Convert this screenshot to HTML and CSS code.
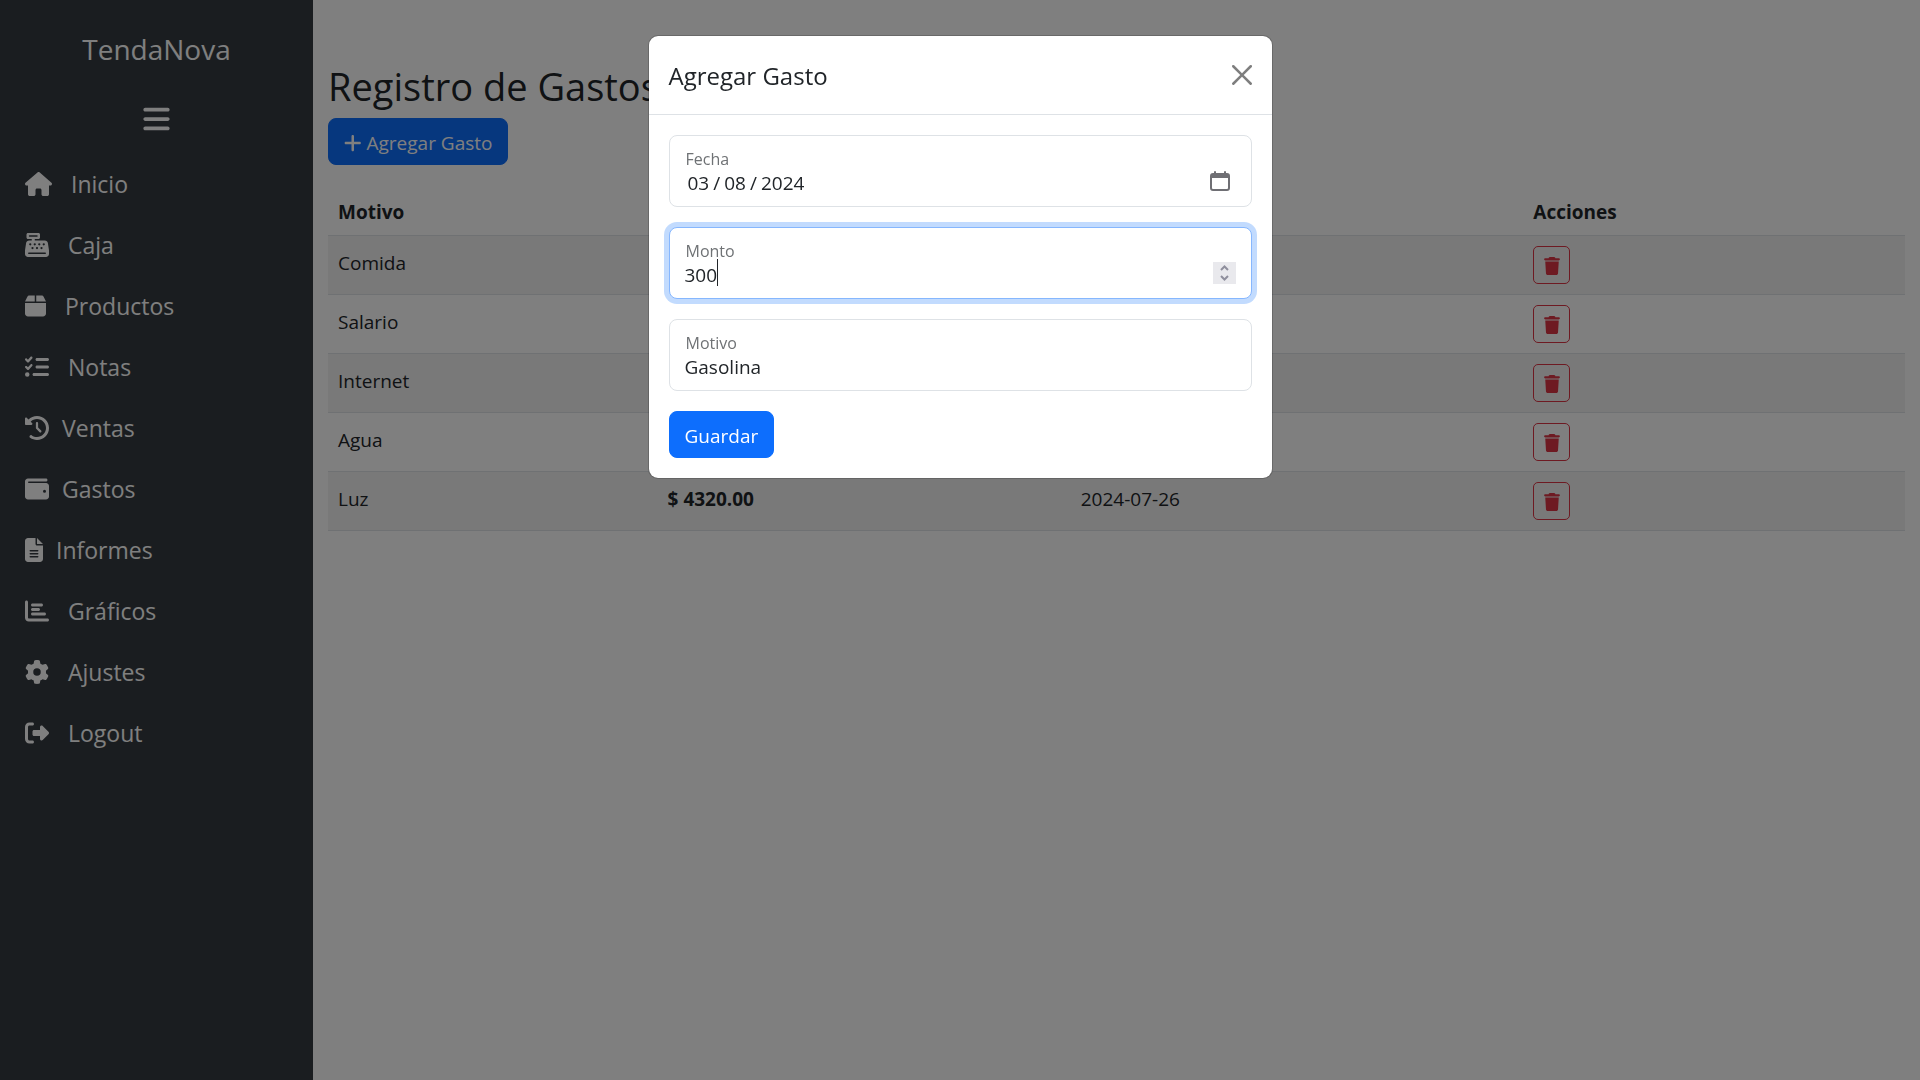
FILE: index.html
```html
<!DOCTYPE html>
<html lang="es">

<head>
    <meta charset="UTF-8">
    <meta name="viewport" content="width=device-width, initial-scale=1.0">
    <title>TendaNova - Gastos</title>
    <link rel="stylesheet" href="styles.css">
</head>

<body>
    <!-- Icono reutilizado en cada fila -->
    <svg class="sprite" aria-hidden="true">
        <symbol id="trash" viewBox="0 0 448 512">
            <path d="M135.2 17.7L128 32H32C14.3 32 0 46.3 0 64S14.3 96 32 96H416c17.7 0 32-14.3 32-32s-14.3-32-32-32H320l-7.2-14.3C307.4 6.8 296.3 0 284.2 0H163.8c-12.1 0-23.2 6.8-28.6 17.7zM416 128H32L53.2 467c1.6 25.3 22.6 45 47.9 45H346.9c25.3 0 46.3-19.7 47.9-45L416 128z"/>
        </symbol>
    </svg>

    <div class="layout">
        <!-- Sidebar -->
        <aside class="sidebar">
            <div class="brand">TendaNova</div>
            <button class="menu-toggle" type="button" aria-label="Menú">
                <svg viewBox="0 0 448 512"><path d="M0 96C0 78.3 14.3 64 32 64H416c17.7 0 32 14.3 32 32s-14.3 32-32 32H32C14.3 128 0 113.7 0 96zM0 256c0-17.7 14.3-32 32-32H416c17.7 0 32 14.3 32 32s-14.3 32-32 32H32c-17.7 0-32-14.3-32-32zM448 416c0 17.7-14.3 32-32 32H32c-17.7 0-32-14.3-32-32s14.3-32 32-32H416c17.7 0 32 14.3 32 32z"/></svg>
            </button>
            <nav class="menu">
                <a class="menu-link spaced" href="#">
                    <svg viewBox="0 0 576 512"><path d="M575.8 255.5c0 18-15 32.1-32 32.1h-32l.7 160.2c0 2.7-.2 5.4-.5 8.1V472c0 22.1-17.9 40-40 40H456c-1.1 0-2.2 0-3.3-.1c-1.4 .1-2.8 .1-4.2 .1H416 392c-22.1 0-40-17.9-40-40V448 384c0-17.7-14.3-32-32-32H256c-17.7 0-32 14.3-32 32v64 24c0 22.1-17.9 40-40 40H160 128.1c-1.5 0-3-.1-4.5-.2c-1.2 .1-2.4 .2-3.6 .2H104c-22.1 0-40-17.9-40-40V360c0-.9 0-1.9 .1-2.8V287.6H32c-18 0-32-14-32-32.1c0-9 3-17 10-24L266.4 8c7-7 15-8 22-8s15 2 21 7L564.8 231.5c8 7 12 15 11 24z"/></svg>
                    Inicio
                </a>
                <a class="menu-link spaced" href="#">
                    <svg viewBox="0 0 512 512"><path d="M64 0C46.3 0 32 14.3 32 32V96c0 17.7 14.3 32 32 32h80v32H87c-31.6 0-58.5 23.1-63.3 54.4L1.1 364.1C.4 368.8 0 373.6 0 378.4V448c0 35.3 28.7 64 64 64H448c35.3 0 64-28.7 64-64V378.4c0-4.8-.4-9.6-1.1-14.4L488.2 214.4C483.5 183.1 456.6 160 425 160H208V128h80c17.7 0 32-14.3 32-32V32c0-17.7-14.3-32-32-32H64zM96 48H256c8.8 0 16 7.2 16 16s-7.2 16-16 16H96c-8.8 0-16-7.2-16-16s7.2-16 16-16zM64 432c0-8.8 7.2-16 16-16H432c8.8 0 16 7.2 16 16s-7.2 16-16 16H80c-8.8 0-16-7.2-16-16zm48-168a24 24 0 1 1 0-48 24 24 0 1 1 0 48zm120-24a24 24 0 1 1 -48 0 24 24 0 1 1 48 0zM160 344a24 24 0 1 1 0-48 24 24 0 1 1 0 48zM328 240a24 24 0 1 1 -48 0 24 24 0 1 1 48 0zM256 344a24 24 0 1 1 0-48 24 24 0 1 1 0 48zM424 240a24 24 0 1 1 -48 0 24 24 0 1 1 48 0zM352 344a24 24 0 1 1 0-48 24 24 0 1 1 0 48z"/></svg>
                    Caja
                </a>
                <a class="menu-link spaced" href="#">
                    <svg viewBox="0 0 448 512"><path d="M50.7 58.5L0 160H208V32H93.7C75.5 32 58.9 42.3 50.7 58.5zM240 160H448L397.3 58.5C389.1 42.3 372.5 32 354.3 32H240V160zm208 32H0V416c0 35.3 28.7 64 64 64H384c35.3 0 64-28.7 64-64V192z"/></svg>
                    Productos
                </a>
                <a class="menu-link spaced" href="#">
                    <svg viewBox="0 0 512 512"><path d="M152.1 38.2c9.9 8.9 10.7 24 1.8 33.9l-72 80c-4.4 4.9-10.6 7.8-17.2 7.9s-12.9-2.4-17.6-7L7 113C-2.3 103.6-2.3 88.4 7 79s24.6-9.4 33.9 0l22.1 22.1 55.1-61.2c8.9-9.9 24-10.7 33.9-1.8zm0 160c9.9 8.9 10.7 24 1.8 33.9l-72 80c-4.4 4.9-10.6 7.8-17.2 7.9s-12.9-2.4-17.6-7L7 273c-9.4-9.4-9.4-24.6 0-33.9s24.6-9.4 33.9 0l22.1 22.1 55.1-61.2c8.9-9.9 24-10.7 33.9-1.8zM224 96c0-17.7 14.3-32 32-32H480c17.7 0 32 14.3 32 32s-14.3 32-32 32H256c-17.7 0-32-14.3-32-32zm0 160c0-17.7 14.3-32 32-32H480c17.7 0 32 14.3 32 32s-14.3 32-32 32H256c-17.7 0-32-14.3-32-32zM160 416c0-17.7 14.3-32 32-32H480c17.7 0 32 14.3 32 32s-14.3 32-32 32H192c-17.7 0-32-14.3-32-32zM48 368a48 48 0 1 1 0 96 48 48 0 1 1 0-96z"/></svg>
                    Notas
                </a>
                <a class="menu-link" href="#">
                    <svg viewBox="0 0 512 512"><path d="M75 75L41 41C25.9 25.9 0 36.6 0 57.9V168c0 13.3 10.7 24 24 24H134.1c21.4 0 32.1-25.9 17-41l-30.8-30.8C155 85.5 203 64 256 64c106 0 192 86 192 192s-86 192-192 192c-40.8 0-78.6-12.7-109.7-34.4c-14.5-10.1-34.4-6.6-44.6 7.9s-6.6 34.4 7.9 44.6C151.2 495 201.7 512 256 512c141.4 0 256-114.6 256-256S397.4 0 256 0C185.3 0 121.3 28.7 75 75zm181 53c-13.3 0-24 10.7-24 24V256c0 6.4 2.5 12.5 7 17l72 72c9.4 9.4 24.6 9.4 33.9 0s9.4-24.6 0-33.9l-65-65V152c0-13.3-10.7-24-24-24z"/></svg>
                    Ventas
                </a>
                <a class="menu-link" href="#">
                    <svg viewBox="0 0 512 512"><path d="M64 32C28.7 32 0 60.7 0 96V416c0 35.3 28.7 64 64 64H448c35.3 0 64-28.7 64-64V192c0-35.3-28.7-64-64-64H80c-8.8 0-16-7.2-16-16s7.2-16 16-16H448c17.7 0 32-14.3 32-32s-14.3-32-32-32H64zM416 272a32 32 0 1 1 0 64 32 32 0 1 1 0-64z"/></svg>
                    Gastos
                </a>
                <a class="menu-link" href="#">
                    <svg viewBox="0 0 384 512"><path d="M64 0C28.7 0 0 28.7 0 64V448c0 35.3 28.7 64 64 64H320c35.3 0 64-28.7 64-64V160H256c-17.7 0-32-14.3-32-32V0H64zM256 0V128H384L256 0zM112 256H272c8.8 0 16 7.2 16 16s-7.2 16-16 16H112c-8.8 0-16-7.2-16-16s7.2-16 16-16zm0 64H272c8.8 0 16 7.2 16 16s-7.2 16-16 16H112c-8.8 0-16-7.2-16-16s7.2-16 16-16zm0 64H272c8.8 0 16 7.2 16 16s-7.2 16-16 16H112c-8.8 0-16-7.2-16-16s7.2-16 16-16z"/></svg>
                    Informes
                </a>
                <a class="menu-link spaced" href="#">
                    <svg viewBox="0 0 512 512"><path d="M32 32c17.7 0 32 14.3 32 32V400c0 8.8 7.2 16 16 16H480c17.7 0 32 14.3 32 32s-14.3 32-32 32H80c-44.2 0-80-35.8-80-80V64C0 46.3 14.3 32 32 32zm96 96c0-17.7 14.3-32 32-32l192 0c17.7 0 32 14.3 32 32s-14.3 32-32 32l-192 0c-17.7 0-32-14.3-32-32zm32 64H288c17.7 0 32 14.3 32 32s-14.3 32-32 32H160c-17.7 0-32-14.3-32-32s14.3-32 32-32zm0 96H416c17.7 0 32 14.3 32 32s-14.3 32-32 32H160c-17.7 0-32-14.3-32-32s14.3-32 32-32z"/></svg>
                    Gráficos
                </a>
                <a class="menu-link spaced" href="#">
                    <svg viewBox="0 0 512 512"><path d="M495.9 166.6c3.2 8.7 .5 18.4-6.4 24.6l-43.3 39.4c1.1 8.3 1.7 16.8 1.7 25.4s-.6 17.1-1.7 25.4l43.3 39.4c6.9 6.2 9.6 15.9 6.4 24.6c-4.4 11.9-9.7 23.3-15.8 34.3l-4.7 8.1c-6.6 11-14 21.4-22.1 31.2c-5.9 7.2-15.7 9.6-24.5 6.8l-55.7-17.7c-13.4 10.3-28.2 18.9-44 25.4l-12.5 57.1c-2 9.1-9 16.3-18.2 17.8c-13.8 2.3-28 3.5-42.5 3.5s-28.7-1.2-42.5-3.5c-9.2-1.5-16.2-8.7-18.2-17.8l-12.5-57.1c-15.8-6.5-30.6-15.1-44-25.4L83.1 425.9c-8.8 2.8-18.6 .3-24.5-6.8c-8.1-9.8-15.5-20.2-22.1-31.2l-4.7-8.1c-6.1-11-11.4-22.4-15.8-34.3c-3.2-8.7-.5-18.4 6.4-24.6l43.3-39.4C64.6 273.1 64 264.6 64 256s.6-17.1 1.7-25.4L22.4 191.2c-6.9-6.2-9.6-15.9-6.4-24.6c4.4-11.9 9.7-23.3 15.8-34.3l4.7-8.1c6.6-11 14-21.4 22.1-31.2c5.9-7.2 15.7-9.6 24.5-6.8l55.7 17.7c13.4-10.3 28.2-18.9 44-25.4l12.5-57.1c2-9.1 9-16.3 18.2-17.8C227.3 1.2 241.5 0 256 0s28.7 1.2 42.5 3.5c9.2 1.5 16.2 8.7 18.2 17.8l12.5 57.1c15.8 6.5 30.6 15.1 44 25.4l55.7-17.7c8.8-2.8 18.6-.3 24.5 6.8c8.1 9.8 15.5 20.2 22.1 31.2l4.7 8.1c6.1 11 11.4 22.4 15.8 34.3zM256 336a80 80 0 1 0 0-160 80 80 0 1 0 0 160z"/></svg>
                    Ajustes
                </a>
                <a class="menu-link spaced" href="#">
                    <svg viewBox="0 0 512 512"><path d="M377.9 105.9L500.7 228.7c7.2 7.2 11.3 17.1 11.3 27.3s-4.1 20.1-11.3 27.3L377.9 406.1c-6.4 6.4-15 9.9-24 9.9c-18.7 0-33.9-15.2-33.9-33.9l0-62.1-128 0c-17.7 0-32-14.3-32-32l0-64c0-17.7 14.3-32 32-32l128 0 0-62.1c0-18.7 15.2-33.9 33.9-33.9c9 0 17.6 3.6 24 9.9zM160 96L96 96c-17.7 0-32 14.3-32 32l0 256c0 17.7 14.3 32 32 32l64 0c17.7 0 32 14.3 32 32s-14.3 32-32 32l-64 0c-53 0-96-43-96-96L0 128C0 75 43 32 96 32l64 0c17.7 0 32 14.3 32 32s-14.3 32-32 32z"/></svg>
                    Logout
                </a>
            </nav>
        </aside>

        <!-- Contenido -->
        <main class="content">
            <h1>Registro de Gastos</h1>
            <button class="btn" type="button">
                <svg class="plus" viewBox="0 0 448 512"><path d="M256 80c0-17.7-14.3-32-32-32s-32 14.3-32 32V224H48c-17.7 0-32 14.3-32 32s14.3 32 32 32H192V432c0 17.7 14.3 32 32 32s32-14.3 32-32V288H400c17.7 0 32-14.3 32-32s-14.3-32-32-32H256V80z"/></svg>
                Agregar Gasto
            </button>

            <table class="table">
                <thead>
                    <tr>
                        <th class="col-motivo">Motivo</th>
                        <th class="col-monto">Monto</th>
                        <th class="col-fecha">Fecha</th>
                        <th>Acciones</th>
                    </tr>
                </thead>
                <tbody>
                    <tr>
                        <td>Comida</td>
                        <td class="amount">$ 500.00</td>
                        <td>2024-08-02</td>
                        <td><button class="btn-delete" type="button" aria-label="Eliminar"><svg><use href="#trash"/></svg></button></td>
                    </tr>
                    <tr>
                        <td>Salario</td>
                        <td class="amount">$ 2500.00</td>
                        <td>2024-08-01</td>
                        <td><button class="btn-delete" type="button" aria-label="Eliminar"><svg><use href="#trash"/></svg></button></td>
                    </tr>
                    <tr>
                        <td>Internet</td>
                        <td class="amount">$ 600.00</td>
                        <td>2024-07-30</td>
                        <td><button class="btn-delete" type="button" aria-label="Eliminar"><svg><use href="#trash"/></svg></button></td>
                    </tr>
                    <tr>
                        <td>Agua</td>
                        <td class="amount">$ 350.00</td>
                        <td>2024-07-28</td>
                        <td><button class="btn-delete" type="button" aria-label="Eliminar"><svg><use href="#trash"/></svg></button></td>
                    </tr>
                    <tr>
                        <td>Luz</td>
                        <td class="amount">$ 4320.00</td>
                        <td>2024-07-26</td>
                        <td><button class="btn-delete" type="button" aria-label="Eliminar"><svg><use href="#trash"/></svg></button></td>
                    </tr>
                </tbody>
            </table>
        </main>
    </div>

    <!-- Modal Agregar Gasto -->
    <div class="backdrop">
        <div class="modal" role="dialog" aria-modal="true" aria-labelledby="modalTitle">
            <div class="modal-header">
                <h2 id="modalTitle">Agregar Gasto</h2>
                <button class="btn-close" type="button" aria-label="Cerrar">
                    <svg viewBox="0 0 16 16"><path d="M.293.293a1 1 0 0 1 1.414 0L8 6.586 14.293.293a1 1 0 1 1 1.414 1.414L9.414 8l6.293 6.293a1 1 0 0 1-1.414 1.414L8 9.414l-6.293 6.293a1 1 0 0 1-1.414-1.414L6.586 8 .293 1.707a1 1 0 0 1 0-1.414z"/></svg>
                </button>
            </div>
            <form class="modal-body">
                <div class="field">
                    <label for="fecha">Fecha</label>
                    <input type="date" id="fecha" value="2024-03-08">
                    <svg class="calendar" viewBox="0 0 20 20" aria-hidden="true">
                        <path fill-rule="evenodd" d="M4 1a1 1 0 0 1 2 0v1h8V1a1 1 0 0 1 2 0v1h1a3 3 0 0 1 3 3v12a3 3 0 0 1-3 3H3a3 3 0 0 1-3-3V5a3 3 0 0 1 3-3h1zM2 7v10a1 1 0 0 0 1 1h14a1 1 0 0 0 1-1V7z"/>
                    </svg>
                </div>
                <div class="field">
                    <label for="monto">Monto</label>
                    <input type="number" id="monto" value="300" autofocus>
                    <span class="caret"></span>
                    <svg class="spinner" viewBox="0 0 23 22" aria-hidden="true">
                        <path d="M8 8l3.500-3.500L15 8M8 14l3.500 3.500L15 14"/>
                    </svg>
                </div>
                <div class="field">
                    <label for="motivo">Motivo</label>
                    <input type="text" id="motivo" value="Gasolina">
                </div>
                <button class="btn" type="submit">Guardar</button>
            </form>
        </div>
    </div>
</body>

</html>
```
FILE: styles.css
```css
* {
    box-sizing: border-box;
}

body {
    margin: 0;
    font-family: "Open Sans", "Noto Sans", sans-serif;
    font-size: 19px;
    line-height: 30px;
    color: #212529;
    background-color: white;
}

button,
input {
    font-family: inherit;
    font-size: inherit;
    line-height: inherit;
    color: inherit;
}

button {
    cursor: pointer;
}

svg {
    display: block;
    fill: currentColor;
}

.sprite {
    display: none;
}

.layout {
    display: flex;
    min-height: 100vh;
}

/* Sidebar */
.sidebar {
    width: 313px;
    flex-shrink: 0;
    padding-top: 29px;
    background-color: #343a40;
    color: white;
}

.brand {
    font-size: 28px;
    line-height: 40px;
    text-align: center;
}

.menu-toggle {
    display: block;
    margin: 35px auto 19px;
    padding: 0;
    border: none;
    background: none;
}

.menu-toggle svg {
    width: 27px;
    height: 30px;
}

.menu-link {
    display: flex;
    align-items: center;
    gap: 13px;
    height: 61px;
    padding: 0 25px;
    font-size: 23px;
    color: white;
    text-decoration: none;
}

.menu-link.spaced {
    gap: 19px;
}

.menu-link svg {
    height: 24px;
}

/* Contenido */
.content {
    flex: 1;
    padding: 62px 15px 15px;
}

h1 {
    margin: 0 0 8px;
    font-size: 38px;
    font-weight: 400;
    line-height: 48px;
}

.btn {
    display: flex;
    align-items: center;
    gap: 5px;
    height: 47px;
    padding: 2px 15px 0;
    border: 1px solid #0d6efd;
    border-radius: 8px;
    background-color: #0d6efd;
    color: white;
}

.plus {
    height: 20px;
}

.table {
    width: 100%;
    margin-top: 20px;
    border-collapse: collapse;
}

.table th,
.table td {
    padding: 12px 10px 8px;
    border-bottom: 1px solid #dee2e6;
    text-align: left;
    vertical-align: top;
}

.table td:last-child {
    padding: 10px;
}

.table tbody tr:nth-child(odd) {
    background-color: #f2f2f2;
}

.col-motivo {
    width: 20.9%;
}

.col-monto {
    width: 26.2%;
}

.col-fecha {
    width: 28.7%;
}

.amount {
    font-weight: 700;
}

.btn-delete {
    display: flex;
    align-items: center;
    justify-content: center;
    width: 37px;
    height: 38px;
    padding: 2px 0 0;
    border: 1px solid #dc3545;
    border-radius: 5px;
    background: none;
    color: #dc3545;
}

.btn-delete svg {
    width: 16px;
    height: 18px;
}

/* Modal */
.backdrop {
    position: fixed;
    inset: 0;
    padding: 35px 20px;
    background-color: rgba(0, 0, 0, 0.5);
}

.modal {
    max-width: 625px;
    margin: 0 auto;
    border: 1px solid rgba(0, 0, 0, 0.175);
    border-radius: 10px;
    background-color: white;
    background-clip: padding-box;
}

.modal-header {
    display: flex;
    align-items: center;
    justify-content: space-between;
    padding: 20px;
    border-bottom: 1px solid #dee2e6;
}

.modal-header h2 {
    margin: 0;
    padding-top: 2px;
    font-size: 24px;
    font-weight: 400;
    line-height: 36px;
}

.btn-close {
    padding: 0;
    border: none;
    background: none;
    color: black;
    opacity: 0.5;
}

.btn-close svg {
    width: 20px;
    height: 20px;
}

.modal-body {
    display: flex;
    flex-direction: column;
    align-items: flex-start;
    gap: 20px;
    padding: 20px;
}

.field {
    position: relative;
    width: 100%;
}

.field label {
    position: absolute;
    top: 11px;
    left: 17px;
    font-size: 16px;
    line-height: 26px;
    color: #6f7275;
}

.field input {
    display: block;
    width: 100%;
    height: 72px;
    padding: 32px 15px 8px;
    border: 1px solid #dee2e6;
    border-radius: 8px;
    background-color: white;
    outline: none;
    appearance: textfield;
}

.field input:focus {
    border-color: #86b7fe;
    box-shadow: 0 0 0 5px rgba(13, 110, 253, 0.25);
    caret-color: transparent;
}

.field input::-webkit-inner-spin-button {
    appearance: none;
}

.field input::-webkit-calendar-picker-indicator {
    opacity: 0;
}

.field input::-webkit-datetime-edit {
    padding: 0 2px;
}

.field input::-webkit-datetime-edit-text {
    padding: 0 3px;
}

/* Cursor de texto del campo activo */
.caret {
    position: absolute;
    left: 48px;
    bottom: 13px;
    width: 1px;
    height: 27px;
    background-color: #212529;
}

.calendar {
    position: absolute;
    right: 22px;
    bottom: 16px;
    width: 20px;
    height: 20px;
    color: #6f6f74;
    pointer-events: none;
}

.spinner {
    position: absolute;
    right: 16px;
    bottom: 15px;
    width: 23px;
    height: 22px;
    background-color: #e9e9ed;
    fill: none;
    stroke: #8f8f9d;
    stroke-width: 2;
    pointer-events: none;
}
```
